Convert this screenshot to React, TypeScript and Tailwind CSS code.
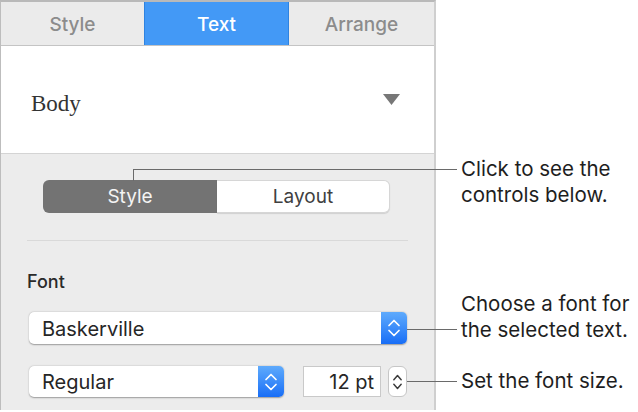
import React from "react";

function UpDown({ color, w = 12, h = 20, sw = 1.8 }: { color: string; w?: number; h?: number; sw?: number }) {
  return (
    <svg width={w} height={h} viewBox="0 0 12 20" fill="none">
      <path d="M2 7.5 L6 3 L10 7.5" stroke={color} strokeWidth={sw} strokeLinecap="round" strokeLinejoin="round" />
      <path d="M2 12.5 L6 17 L10 12.5" stroke={color} strokeWidth={sw} strokeLinecap="round" strokeLinejoin="round" />
    </svg>
  );
}

function BlueChevrons() {
  return (
    <svg width="14" height="22" viewBox="0 0 14 22" fill="none">
      <path d="M2 8.5 L7 3.5 L12 8.5" stroke="#ffffff" strokeWidth="1.7" strokeLinecap="round" strokeLinejoin="round" />
      <path d="M2 13.5 L7 18.5 L12 13.5" stroke="#ffffff" strokeWidth="1.7" strokeLinecap="round" strokeLinejoin="round" />
    </svg>
  );
}

function BluePart() {
  return (
    <div className="w-[26px] h-full flex items-center justify-center rounded-r-[5px] bg-gradient-to-b from-[#5eaafc] to-[#176df6]">
      <BlueChevrons />
    </div>
  );
}

export default function App() {
  return (
    <div className="relative flex w-[638px] h-[412px] bg-white font-[Inter,'Liberation_Sans',sans-serif] text-[#222]">
      {/* Panel */}
      <div className="w-[436px] h-[410px] flex flex-col border-l border-l-[#bdbdbd] border-r-2 border-r-[#cfcfcf] border-t-2 border-t-[#b9b9b9]">
        {/* Tabs */}
        <div className="h-[44px] grid grid-cols-[143px_145px_1fr] bg-[#ebebeb] border-b border-[#c4c4c4] text-[19px] font-medium">
          <div className="flex items-center justify-center pt-[3px] text-[#8c8c8c]">Style</div>
          <div className="flex items-center justify-center pt-[3px] bg-[#4399f6] border-x border-[#2f83e0] text-white">Text</div>
          <div className="flex items-center justify-center pt-[3px] text-[#8c8c8c]">Arrange</div>
        </div>
        {/* Body */}
        <div className="h-[108px] bg-white border-b border-[#d4d4d4] flex items-center pl-[30px] pr-[34px]">
          <span className="flex-1 pt-[9px] font-['Liberation_Serif',serif] text-[23px] text-[#333]">Body</span>
          <svg width="17" height="11" viewBox="0 0 17 11">
            <path d="M0 0 H17 L8.5 11 Z" fill="#777777" />
          </svg>
        </div>
        {/* Gray area */}
        <div className="flex-1 bg-[#ececec] flex flex-col">
          <div className="mt-[26px] ml-[42px] w-[347px] h-[33px] flex rounded-[6px] text-[19px]">
            <div className="w-[174px] h-full bg-[#737373] text-[#f4f4f4] rounded-l-[6px] flex items-center justify-center pt-[1px]">Style</div>
            <div className="flex-1 h-full bg-white text-[#404040] rounded-r-[6px] border border-l-0 border-[#d6d6d6] shadow-[0_1px_1px_rgba(0,0,0,0.12)] flex items-center justify-center pt-[1px]">Layout</div>
          </div>
          <div className="mt-[27px] ml-[26px] w-[381px] h-px bg-[#d9d9d9]" />
          <div className="mt-[29px] ml-[26px] h-[24px] leading-[24px] text-[18px] font-medium text-[#2a2a2a]">Font</div>
          <div className="mt-[18px] ml-[28px] w-[378px] h-[32px] flex bg-white rounded-[5px] shadow-[0_0.5px_1.5px_rgba(0,0,0,0.35)]">
            <div className="flex-1 flex items-center pl-[13px] pt-[1px] text-[20px] text-[#262626]">Baskerville</div>
            <BluePart />
          </div>
          <div className="mt-[22px] ml-[28px] h-[31px] flex">
            <div className="w-[255px] h-full flex bg-white rounded-[5px] shadow-[0_0.5px_1.5px_rgba(0,0,0,0.35)]">
              <div className="flex-1 flex items-center pl-[13px] pt-[1px] text-[20px] text-[#262626]">Regular</div>
              <BluePart />
            </div>
            <div className="ml-[19px] w-[78px] h-full bg-white border border-[#c9c9c9] flex items-center justify-end pr-[6px] pt-[1px] text-[20px] text-[#262626]">12 pt</div>
            <div className="ml-[7px] w-[19px] h-full bg-white rounded-[6px] border border-[#c6c6c6] flex items-center justify-center">
              <UpDown color="#3a3a3a" w={11} h={22} sw={1.6} />
            </div>
          </div>
        </div>
      </div>

      {/* Callout texts */}
      <div className="flex-1 pl-[25px] flex flex-col text-[20.5px] leading-[26px] text-[#1e1e1e]">
        <div className="mt-[156px]">Click to see the<br />controls below.</div>
        <div className="mt-[83px]">Choose a font for<br />the selected text.</div>
        <div className="mt-[25px]">Set the font size.</div>
      </div>

      {/* Callout lines (overlay) */}
      <div className="absolute left-[133px] top-[169px] w-px h-[12px] bg-[#6a6a6a]" />
      <div className="absolute left-[133px] top-[169px] w-[324px] h-px bg-[#6a6a6a]" />
      <div className="absolute left-[407px] top-[329px] w-[50px] h-px bg-[#6a6a6a]" />
      <div className="absolute left-[407px] top-[381px] w-[50px] h-px bg-[#6a6a6a]" />
    </div>
  );
}
